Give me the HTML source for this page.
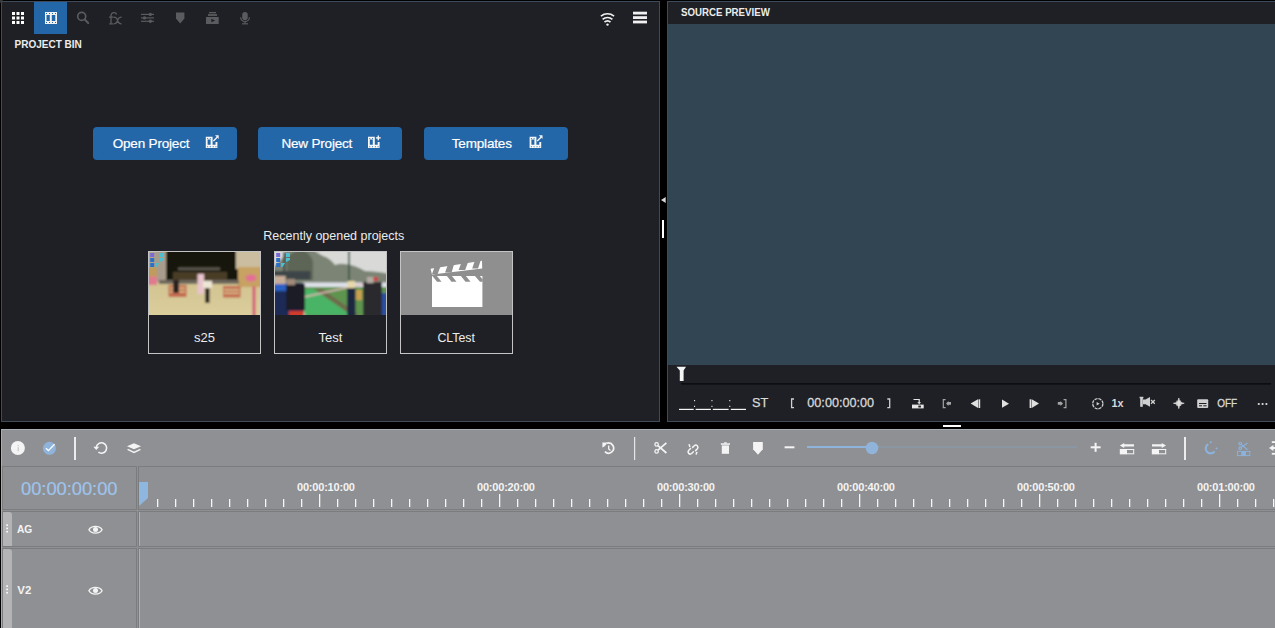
<!DOCTYPE html>
<html><head><meta charset="utf-8">
<style>
html,body{margin:0;padding:0;background:#000;width:1275px;height:628px;overflow:hidden}
*{box-sizing:border-box}
#root{position:relative;width:1275px;height:628px;overflow:hidden;background:#000;font-family:"Liberation Sans",sans-serif}
.abs{position:absolute}
#bin{left:1px;top:1px;width:659px;height:421px;background:#1e2025;border:1px solid #3e4b58}
#src{left:667px;top:1px;width:700px;height:421px;background:#1e2025;border:1px solid #3e4b58}
#prev{left:668px;top:24px;width:700px;height:341px;background:#324553}
#tl{left:1px;top:429px;width:1400px;height:300px;background:#8f9093;border:1px solid #a4acb4}
.cell{position:absolute;border:1px solid #7b7c7e}
.btn{position:absolute;top:127px;width:144px;height:33px;background:#2467a9;border-radius:4px}
.card{position:absolute;top:251px;width:113px;height:103px;border:1px solid #c4c4c4;background:#1e2025;overflow:hidden}
.thumb{position:absolute;left:0;top:0;width:111px;height:63px;overflow:hidden}
svg{position:absolute;left:0;top:0}
</style></head><body><div id="root">
<div id="bin" class="abs"></div>
<div id="src" class="abs"></div>
<div id="prev" class="abs"></div>
<div id="tl" class="abs"></div>
<!-- timeline cells -->
<div class="cell" style="left:2px;top:466px;width:135px;height:44px"></div>
<div class="cell" style="left:138px;top:466px;width:1200px;height:44px"></div>
<div class="cell" style="left:2px;top:511px;width:135px;height:36px"></div>
<div class="cell" style="left:138px;top:511px;width:1200px;height:36px"></div>
<div class="cell" style="left:2px;top:548px;width:135px;height:200px"></div>
<div class="cell" style="left:138px;top:548px;width:1200px;height:200px"></div>
<!-- buttons -->
<div class="btn" style="left:93px"></div>
<div class="btn" style="left:258px"></div>
<div class="btn" style="left:424px"></div>
<!-- cards -->
<div class="card" style="left:148px"><div class="thumb" id="t1"><svg width="111" height="63" viewBox="0 0 111 63" style="position:absolute;left:0;top:0"><defs><filter id="b1" x="-20%" y="-20%" width="140%" height="140%"><feGaussianBlur stdDeviation="0.8"/></filter>
<linearGradient id="fl" x1="0" y1="0" x2="0" y2="1"><stop offset="0" stop-color="#c9b985"/><stop offset="1" stop-color="#dccf9e"/></linearGradient></defs>
<g filter="url(#b1)">
<rect x="-4" y="-4" width="119" height="71" fill="url(#fl)"/>
<rect x="16" y="-4" width="73" height="34" fill="#17130e"/>
<rect x="-4" y="-4" width="21" height="34" fill="#b2a58f"/>
<rect x="5" y="-4" width="11" height="34" fill="#a89c8c"/>
<rect x="-4" y="15" width="12" height="17" fill="#c09c5c"/>
<rect x="87" y="-4" width="28" height="21" fill="#cbbd9f"/>
<rect x="89" y="15" width="26" height="20" fill="#c7a263"/>
<rect x="29" y="15.5" width="42" height="2.5" fill="#5e5a50"/>
<rect x="24" y="20" width="54" height="9" fill="#4a3d28"/>
<rect x="10" y="28" width="80" height="4" fill="#6d665c"/>
<rect x="19.5" y="33" width="18" height="12" fill="#c46a50"/>
<rect x="21" y="35.5" width="15" height="1.5" fill="#d9c590"/><rect x="21" y="39" width="15" height="1.5" fill="#d9c590"/>
<rect x="74" y="34" width="17.5" height="11.5" fill="#c46a50"/>
<rect x="75" y="37" width="15" height="1.5" fill="#d9c590"/><rect x="75" y="40.5" width="15" height="1.5" fill="#d9c590"/>
<rect x="24" y="28" width="6" height="13" fill="#2a2420"/>
<rect x="48.5" y="22" width="6.5" height="20" fill="#e8c4cc"/>
<rect x="54" y="29" width="9" height="7" fill="#eee6d4"/>
<rect x="56" y="36" width="4.5" height="15" fill="#262220"/>
<ellipse cx="102" cy="26" rx="5.5" ry="3.5" fill="#e46e94"/>
<rect x="103.5" y="34.5" width="3" height="32" fill="#d45c78"/>
<rect x="-4" y="24.5" width="12" height="8.5" fill="#e07a8e"/>
</g><g><rect x="1.2" y="1" width="4" height="4" fill="#7a6ad8"/><rect x="1.2" y="6" width="4" height="4" fill="#2a6fc8"/><rect x="1.2" y="11" width="4" height="4" fill="#2a6fc8"/><rect x="11" y="1" width="4" height="4" fill="#4cc0d0"/><path d="M11,6 H15 V8 L11,10 Z" fill="#4cc0d0"/><path d="M6.2,11 H10.2 L7.5,15 H6.2 Z" fill="#4cc0d0"/></g></svg></div></div>
<div class="card" style="left:274px"><div class="thumb" id="t2"><svg width="111" height="63" viewBox="0 0 111 63" style="position:absolute;left:0;top:0"><defs><filter id="b2" x="-20%" y="-20%" width="140%" height="140%"><feGaussianBlur stdDeviation="0.8"/></filter></defs>
<g filter="url(#b2)">
<rect x="-4" y="-4" width="119" height="71" fill="#d9dad8"/>
<path d="M-4,16 Q4,12 10,2 L12,-4 H36 Q44,2 48,4 Q55,6 60,13 Q64,11 70,12 Q80,13 90,19 Q100,19 115,22 V31 H-4 Z" fill="#7b8474"/>
<path d="M12,28 V6 Q18,-2 28,-2 Q36,2 38,10 V28 Z" fill="#5d6656"/><rect x="8" y="0" width="2.5" height="28" fill="#4a4c48"/><rect x="73" y="-4" width="2" height="42" fill="#3e5a48"/>
<rect x="-4" y="19" width="39.5" height="9" fill="#3e4448"/>
<rect x="26.7" y="30.5" width="88" height="6" fill="#dfe2ea"/>
<rect x="30" y="35" width="85" height="32" fill="#5f9450"/>
<path d="M40,37 L47,37 L84,63 L76,63 Z" fill="#6e6a4c"/>
<path d="M24.5,37.6 L38,37 L76,63 L30,63 Z" fill="#4ab466"/>
<path d="M29,45 L90.4,31.5" stroke="#e0b8b8" stroke-width="1.3"/>
<rect x="81" y="38" width="6" height="10" fill="#c8a050"/>
<rect x="-4" y="31" width="33" height="36" fill="#1f2c55"/>
<rect x="-4" y="31" width="19.7" height="8" fill="#2c5ec4"/>
<rect x="-4" y="24" width="14.7" height="8" fill="#c8ae98"/>
<rect x="11" y="32" width="19" height="26" fill="#1e1f26"/>
<rect x="12" y="27" width="8" height="6" fill="#a08a78"/>
<rect x="72" y="36" width="8.5" height="31" fill="#1c283f"/>
<rect x="72.5" y="29" width="7.5" height="7" fill="#e6d8a8"/>
<rect x="88" y="30" width="19" height="37" fill="#2c2c2e"/>
<rect x="92" y="25" width="6.6" height="6" fill="#b4aca4"/>
<rect x="98.6" y="25" width="4.4" height="4" fill="#cc4040"/>
<rect x="107" y="41" width="8" height="26" fill="#2a50a0"/>
<rect x="14" y="59" width="15" height="8" fill="#d03a2a"/>
</g><g><rect x="1.2" y="1" width="4" height="4" fill="#7a6ad8"/><rect x="1.2" y="6" width="4" height="4" fill="#2a6fc8"/><rect x="1.2" y="11" width="4" height="4" fill="#2a6fc8"/><rect x="11" y="1" width="4" height="4" fill="#4cc0d0"/><path d="M11,6 H15 V8 L11,10 Z" fill="#4cc0d0"/><path d="M6.2,11 H10.2 L7.5,15 H6.2 Z" fill="#4cc0d0"/></g></svg></div></div>
<div class="card" style="left:400px"><div class="thumb" id="t3" style="background:#8f8f8f"></div></div>
<svg width="1275" height="628" viewBox="0 0 1275 628" style="font-family:'Liberation Sans',sans-serif">
<!-- ===== PROJECT BIN TOOLBAR ===== -->
<path d="M0,0 H3.2 L0,3.2 Z" fill="#383838"/><rect x="1" y="1" width="1" height="1" fill="#3a3d40"/>
<rect x="34" y="2" width="33" height="32" fill="#2467a9"/>
<g fill="#ffffff">
<rect x="12" y="12" width="3" height="3"/><rect x="16.5" y="12" width="3" height="3"/><rect x="21" y="12" width="3" height="3"/>
<rect x="12" y="16.5" width="3" height="3"/><rect x="16.5" y="16.5" width="3" height="3"/><rect x="21" y="16.5" width="3" height="3"/>
<rect x="12" y="21" width="3" height="3"/><rect x="16.5" y="21" width="3" height="3"/><rect x="21" y="21" width="3" height="3"/>
</g>
<rect x="45" y="12" width="12" height="12" fill="#f2f2f2"/>
<g fill="#2467a9">
<rect x="46.5" y="15" width="3.3" height="6"/><rect x="51.8" y="15" width="3.5" height="6"/>
<rect x="46" y="13" width="1" height="1"/><rect x="49" y="13" width="1" height="1"/><rect x="52" y="13" width="1" height="1"/><rect x="55" y="13" width="1" height="1"/>
<rect x="46" y="22" width="1" height="1"/><rect x="49" y="22" width="1" height="1"/><rect x="52" y="22" width="1" height="1"/><rect x="55" y="22" width="1" height="1"/>
</g>
<g stroke="#595b5e" fill="none">
<circle cx="81.7" cy="16.4" r="4" stroke-width="1.7"/>
<line x1="84.6" y1="19.4" x2="88.2" y2="23" stroke-width="2" stroke-linecap="round"/>
<line x1="141" y1="14.4" x2="154" y2="14.4" stroke-width="1.2"/>
<line x1="141" y1="17.9" x2="154" y2="17.9" stroke-width="1.2"/>
<line x1="141" y1="21.3" x2="154" y2="21.3" stroke-width="1.2"/>
<line x1="242" y1="23.8" x2="248" y2="23.8" stroke-width="1.2"/>
<line x1="245" y1="21.5" x2="245" y2="23.8" stroke-width="1.2"/>
<path d="M240.6,17.2 A4.4,4.4 0 0 0 249.4,17.2" stroke-width="1.2"/>
</g>
<g fill="none" stroke="#595b5e" stroke-width="1.3"><path d="M111,23.8 V16 Q111,12.6 114.2,12.6 Q116.4,12.6 116.4,14.6"/><path d="M109,17.2 H113.5 M109.2,23.8 H113"/><path d="M113.6,17.2 Q116.8,17.2 117.6,20.5 Q118.4,23.8 121.6,23.8 M121.6,17.2 Q118.4,17.2 117.6,20.5 Q116.8,23.8 113.6,23.8"/></g>
<g fill="#595b5e">
<circle cx="150.3" cy="14.4" r="1.7"/><circle cx="144.5" cy="17.9" r="1.7"/><circle cx="150.3" cy="21.3" r="1.7"/>
<path d="M176,12.6 H184.4 V18.4 L180.2,23.6 L176,18.4 Z"/>
<rect x="209" y="12" width="7" height="1.3"/><rect x="208" y="14.1" width="9" height="1.8"/><rect x="206" y="17" width="12.7" height="7"/>
<rect x="242.2" y="11.9" width="5.5" height="8.4" rx="2.75"/>
</g>
<path d="M211.3,18.8 L215.2,20.5 L211.3,22.2 Z" fill="#1e2025"/>
<!-- wifi -->
<g stroke="#f0f0f0" fill="none" stroke-width="1.6">
<path d="M600.9,16.1 A11.1,11.1 0 0 1 614.1,16.1"/>
<path d="M602.6,19.3 A7.5,7.5 0 0 1 612.4,19.3"/>
<path d="M604.5,22.1 A4.2,4.2 0 0 1 610.5,22.1"/>
</g>
<circle cx="607.5" cy="24.6" r="1.2" fill="#f0f0f0"/>
<g fill="#f0f0f0">
<rect x="633" y="11.7" width="14" height="2.8"/><rect x="633" y="16.2" width="14" height="2.8"/><rect x="633" y="20.6" width="14" height="2.8"/>
</g>
<text x="14.5" y="48" font-size="11" font-weight="bold" fill="#ececec" textLength="67.3" lengthAdjust="spacingAndGlyphs">PROJECT BIN</text>
<!-- buttons text -->
<g font-size="13.5" fill="#ffffff" letter-spacing="-0.18" stroke="#ffffff" stroke-width="0.2">
<text x="112.7" y="147.6">Open Project</text>
<text x="281.4" y="147.6">New Project</text>
<text x="451.8" y="147.6">Templates</text>
</g>
<text x="263.3" y="240" font-size="12.8" fill="#ececec" textLength="141" lengthAdjust="spacingAndGlyphs">Recently opened projects</text>
<g font-size="13" fill="#ececec" text-anchor="middle">
<text x="204.5" y="342">s25</text>
<text x="330.5" y="342">Test</text>
<text x="437.4" y="342" text-anchor="start" textLength="37.6" lengthAdjust="spacingAndGlyphs">CLTest</text>
</g>
</svg>

<svg width="1275" height="628" viewBox="0 0 1275 628" style="font-family:'Liberation Sans',sans-serif">
<!-- ===== SPLITTERS ===== -->
<path d="M661,200 L665.7,197 L665.7,203 Z" fill="#d8d8d8"/>
<rect x="662" y="220" width="2" height="18" fill="#ffffff"/>
<rect x="943" y="425" width="18" height="2" fill="#ffffff"/>
<!-- ===== SOURCE PREVIEW ===== -->
<text x="681" y="15.8" font-size="11" font-weight="bold" fill="#ececec" textLength="88.8" lengthAdjust="spacingAndGlyphs">SOURCE PREVIEW</text>
<rect x="681" y="383" width="590" height="1.6" fill="#0c0d10"/>
<path d="M676.5,366.8 H686 L683.6,370.5 V381 H679.8 V370.5 Z" fill="#f4f4f4"/>
<g fill="#f6f6f6">
<rect x="679" y="408.8" width="14.7" height="1.2"/><rect x="695.6" y="408.8" width="15.3" height="1.2"/><rect x="712.8" y="408.8" width="15.8" height="1.2"/><rect x="730.8" y="408.8" width="15.2" height="1.2"/>
<rect x="694" y="400.1" width="1.1" height="1.1"/><rect x="694" y="405.8" width="1.1" height="1.1"/>
<rect x="711.4" y="400.1" width="1.1" height="1.1"/><rect x="711.4" y="405.8" width="1.1" height="1.1"/>
<rect x="729.2" y="400.1" width="1.1" height="1.1"/><rect x="729.2" y="405.8" width="1.1" height="1.1"/>
</g>
<g fill="#d9d9d9" font-size="13">
<text x="752" y="407" textLength="16.3" lengthAdjust="spacingAndGlyphs" stroke="#d9d9d9" stroke-width="0.25">ST</text>
<text x="807.3" y="407" font-size="13.6" textLength="66.8" lengthAdjust="spacingAndGlyphs" stroke="#d9d9d9" stroke-width="0.3">00:00:00:00</text>
<text x="1111.6" y="407" font-size="11.5" font-weight="bold" textLength="12" lengthAdjust="spacingAndGlyphs">1x</text>
<text x="1217.2" y="407" font-size="11" textLength="20" lengthAdjust="spacingAndGlyphs" stroke="#d9d9d9" stroke-width="0.3">OFF</text>
</g>
<g fill="none" stroke="#cfcfcf" stroke-width="1.3">
<path d="M794,399 H791.6 V407.6 H794"/>
<path d="M887.3,399 H889.7 V407.6 H887.3"/>
</g>
<!-- insert icon -->
<g fill="#e6e6e6">
<rect x="912" y="404.6" width="11.7" height="3.8"/>
</g>
<rect x="918.3" y="405.6" width="2.6" height="1.9" fill="#1e2025"/>
<path d="M913.5,399.5 H919.2 V403" fill="none" stroke="#e6e6e6" stroke-width="1.2"/>
<path d="M917.3,402.3 L921.1,402.3 L919.2,404.2 Z" fill="#e6e6e6"/>
<!-- mark in -->
<g fill="none" stroke="#a4a4a4" stroke-width="1.2"><path d="M945.6,399.6 H943.3 V407.6 H945.6"/></g>
<path d="M946,403.4 L948.5,400.9 V402 H951 V404.8 H948.5 V405.9 Z" fill="#a4a4a4"/>
<!-- step back -->
<path d="M978,399.3 V408 L970.6,403.6 Z" fill="#e0e0e0"/><rect x="978.5" y="399.3" width="1.7" height="8.7" fill="#e0e0e0"/>
<path d="M1002,399.6 V407.8 L1009,403.7 Z" fill="#e0e0e0"/>
<rect x="1029.6" y="399.3" width="1.7" height="8.7" fill="#e0e0e0"/><path d="M1031.7,399.3 V408 L1039,403.6 Z" fill="#e0e0e0"/>
<!-- mark out -->
<g fill="none" stroke="#a4a4a4" stroke-width="1.2"><path d="M1063.6,399.6 H1065.9 V407.6 H1063.6"/></g>
<path d="M1063,403.4 L1060.5,400.9 V402 H1057.8 V404.8 H1060.5 V405.9 Z" fill="#a4a4a4"/>
<!-- speed circle -->
<circle cx="1097.8" cy="403.7" r="5.1" fill="none" stroke="#cfcfcf" stroke-width="1.3" stroke-dasharray="3.1 0.9"/>
<path d="M1096.6,401.9 V405.5 L1099.7,403.7 Z" fill="#cfcfcf"/>
<!-- mute -->
<g fill="#d0d0d0">
<rect x="1140.2" y="397" width="2.6" height="9.8"/>
<rect x="1139.6" y="396.8" width="3.8" height="1.5"/>
<path d="M1143,399.5 H1145.5 L1150,396.9 V406.8 L1145.5,404.2 H1143 Z"/>
</g>
<g stroke="#d0d0d0" stroke-width="1.3"><line x1="1151" y1="400" x2="1154.8" y2="403.8"/><line x1="1154.8" y1="400" x2="1151" y2="403.8"/></g>
<!-- waveform -->
<path d="M1173.5,403.3 Q1178.3,402.9 1178.8,398 Q1179.3,402.9 1184.2,403.3 Q1179.3,403.7 1178.8,408.6 Q1178.3,403.7 1173.5,403.3 Z" fill="#e0e0e0" stroke="#d8d8d8" stroke-width="0.7"/><path d="M1177,400.5 V406 M1180.6,400.5 V406" stroke="#c8c8c8" stroke-width="0.9"/>
<!-- subtitles -->
<rect x="1197.2" y="399.3" width="11" height="8.6" rx="1" fill="#d0d0d0"/>
<g fill="#1e2025"><rect x="1199" y="403" width="7.5" height="1"/><rect x="1199" y="405.3" width="3" height="1"/><rect x="1203.3" y="405.3" width="3.3" height="1"/></g>
<!-- more -->
<g fill="#e0e0e0"><circle cx="1258.8" cy="404" r="1.1"/><circle cx="1262.6" cy="404" r="1.1"/><circle cx="1266.4" cy="404" r="1.1"/></g>
</svg>

<svg width="1275" height="628" viewBox="0 0 1275 628" style="font-family:'Liberation Sans',sans-serif">
<!-- ===== TIMELINE TOOLBAR ===== -->
<circle cx="17.9" cy="448" r="7" fill="#f4f4f4"/>
<rect x="17.6" y="444.9" width="1.3" height="1.3" fill="#c9cacc"/><rect x="17.6" y="447.2" width="1.3" height="4" fill="#c9cacc"/>
<circle cx="49.45" cy="448.3" r="6.5" fill="#8fb3d9"/>
<path d="M45.9,448.3 L48.4,450.6 L54.6,444.3" fill="none" stroke="#ffffff" stroke-width="1.3"/>
<rect x="74" y="437" width="2" height="23" fill="#ececec"/>
<path d="M96.3,447.2 A5.2,5.2 0 1 1 98.4,452.2" fill="none" stroke="#f4f4f4" stroke-width="1.6"/>
<path d="M93.4,446.7 L99.2,446.7 L96.3,450.1 Z" fill="#f4f4f4"/>
<path d="M127,446.2 L134,443.2 L141,446.2 L134,449.3 Z" fill="#f4f4f4"/>
<path d="M127.6,449.4 L134,452.4 L140.4,449.4" fill="none" stroke="#f4f4f4" stroke-width="1.4"/>
<!-- history -->
<path d="M606.6,443.3 A5.1,5.1 0 1 1 604.9,451.7" fill="none" stroke="#f4f4f4" stroke-width="1.7"/>
<path d="M602.4,442.6 H607.2 L606.2,444.6 L604.4,446.5 L602.4,447.4 Z" fill="#f4f4f4"/>
<path d="M608.7,445.6 V448.9 L610.5,450.4" fill="none" stroke="#f4f4f4" stroke-width="1.3"/>
<rect x="634" y="437" width="1.2" height="23" fill="#e6e6e6"/>
<!-- scissors -->
<g fill="none" stroke="#f4f4f4">
<circle cx="656.6" cy="444.4" r="1.7" stroke-width="1.3"/><circle cx="656.6" cy="451.4" r="1.7" stroke-width="1.3"/>
<line x1="658" y1="445.6" x2="666.4" y2="453" stroke-width="1.7"/><line x1="658" y1="450.2" x2="666.4" y2="442.8" stroke-width="1.7"/>
</g>
<!-- unlink -->
<g fill="none" stroke="#f4f4f4" stroke-width="1.5" stroke-linecap="round">
<path d="M690.5,448.5 L688.6,450.4 A2.2,2.2 0 0 0 691.7,453.5 L693.4,451.8"/>
<path d="M695.6,450.6 L697.4,448.8 A2.2,2.2 0 0 0 694.3,445.7 L692.6,447.4"/>
<line x1="689.2" y1="444.8" x2="689.8" y2="446.6"/><line x1="696.8" y1="452.4" x2="696.2" y2="454"/>
</g>
<!-- trash -->
<g fill="#f4f4f4"><rect x="720.8" y="443.3" width="9.2" height="1.5"/><rect x="724" y="442.3" width="2.8" height="1.2"/><rect x="721.8" y="445.4" width="7.2" height="8.4"/></g>
<path d="M753.1,441.9 H762.8 V449.2 L758,454.7 L753.1,449.2 Z" fill="#f4f4f4"/>
<rect x="784.6" y="446.3" width="9.8" height="2" fill="#f4f4f4"/>
<!-- slider -->
<rect x="807" y="446" width="65" height="2" fill="#8fb4dc"/>
<rect x="872" y="446" width="205" height="2" fill="#8a97a3"/>
<circle cx="872" cy="448" r="6.3" fill="#8fb3d9"/>
<g fill="#f4f4f4"><rect x="1090.7" y="446.3" width="9.9" height="2"/><rect x="1094.6" y="442.8" width="2" height="9"/></g>
<!-- arrow clip left -->
<path d="M1119.9,445.4 L1124.2,442.9 V444.3 H1134 V446.5 H1124.2 V447.9 Z" fill="#f4f4f4"/>
<rect x="1120.3" y="449.5" width="13.4" height="4.3" fill="none" stroke="#f4f4f4" stroke-width="1"/>
<rect x="1120" y="449.2" width="7" height="4.9" fill="#f4f4f4"/>
<!-- arrow clip right -->
<path d="M1166,445.4 L1161.7,442.9 V444.3 H1152 V446.5 H1161.7 V447.9 Z" fill="#f4f4f4"/>
<rect x="1152.3" y="449.5" width="13.4" height="4.3" fill="none" stroke="#f4f4f4" stroke-width="1"/>
<rect x="1152" y="449.2" width="7" height="4.9" fill="#f4f4f4"/>
<rect x="1184" y="437" width="2" height="23" fill="#ececec"/>
<!-- magnet -->
<path d="M1208.3,444.2 A4.9,4.9 0 1 0 1214.6,451.4" fill="none" stroke="#8cb3de" stroke-width="2.1"/>
<path d="M1210.8,441.1 L1212,442.3 L1210.8,443.5 L1209.6,442.3 Z M1216.6,447.2 L1217.8,448.4 L1216.6,449.6 L1215.4,448.4 Z" fill="#8cb3de"/>
<!-- scissors clip -->
<g fill="none" stroke="#8cb3de" stroke-width="1.1">
<circle cx="1240.2" cy="443.6" r="1.3"/><circle cx="1240.2" cy="448.2" r="1.3"/>
<line x1="1241.3" y1="444.4" x2="1247.5" y2="449.8"/><line x1="1241.3" y1="447.4" x2="1247.5" y2="443"/>
<rect x="1237.4" y="451.4" width="12.5" height="4.2" stroke-width="0.9"/>
</g>
<rect x="1241.3" y="451.4" width="4.6" height="4.2" fill="#8cb3de"/>
<!-- partial -->
<path d="M1269,448 L1273.5,445 V451 Z" fill="#f4f4f4"/><rect x="1272" y="447" width="4" height="2" fill="#f4f4f4"/>
<rect x="1271.8" y="441.2" width="4" height="1.8" fill="#f4f4f4"/><rect x="1271.8" y="452.9" width="4" height="1.8" fill="#f4f4f4"/>
<!-- ===== HEADER / RULER ===== -->
<text x="21" y="495" font-size="18" fill="#9ec4ed" stroke="#9ec4ed" stroke-width="0.2" textLength="96.5" lengthAdjust="spacingAndGlyphs">00:00:00:00</text>
<path d="M139,482 H148 V498 L139,506 Z" fill="#8fb6df"/>
<rect x="139" y="512" width="1" height="34" fill="#8fb6df"/><rect x="139" y="549" width="1" height="80" fill="#8fb6df"/>
<g fill="#f6f6f6"><rect x="157" y="499" width="1.3" height="8"/><rect x="175" y="499" width="1.3" height="8"/><rect x="193" y="499" width="1.3" height="8"/><rect x="211" y="499" width="1.3" height="8"/><rect x="229" y="499" width="1.3" height="8"/><rect x="247" y="499" width="1.3" height="8"/><rect x="265" y="499" width="1.3" height="8"/><rect x="283" y="499" width="1.3" height="8"/><rect x="301" y="499" width="1.3" height="8"/><rect x="319" y="494" width="1.3" height="13"/><rect x="337" y="499" width="1.3" height="8"/><rect x="355" y="499" width="1.3" height="8"/><rect x="373" y="499" width="1.3" height="8"/><rect x="391" y="499" width="1.3" height="8"/><rect x="409" y="499" width="1.3" height="8"/><rect x="427" y="499" width="1.3" height="8"/><rect x="445" y="499" width="1.3" height="8"/><rect x="463" y="499" width="1.3" height="8"/><rect x="481" y="499" width="1.3" height="8"/><rect x="499" y="494" width="1.3" height="13"/><rect x="517" y="499" width="1.3" height="8"/><rect x="535" y="499" width="1.3" height="8"/><rect x="553" y="499" width="1.3" height="8"/><rect x="571" y="499" width="1.3" height="8"/><rect x="589" y="499" width="1.3" height="8"/><rect x="607" y="499" width="1.3" height="8"/><rect x="625" y="499" width="1.3" height="8"/><rect x="643" y="499" width="1.3" height="8"/><rect x="661" y="499" width="1.3" height="8"/><rect x="679" y="494" width="1.3" height="13"/><rect x="697" y="499" width="1.3" height="8"/><rect x="715" y="499" width="1.3" height="8"/><rect x="733" y="499" width="1.3" height="8"/><rect x="751" y="499" width="1.3" height="8"/><rect x="769" y="499" width="1.3" height="8"/><rect x="787" y="499" width="1.3" height="8"/><rect x="805" y="499" width="1.3" height="8"/><rect x="823" y="499" width="1.3" height="8"/><rect x="841" y="499" width="1.3" height="8"/><rect x="859" y="494" width="1.3" height="13"/><rect x="877" y="499" width="1.3" height="8"/><rect x="895" y="499" width="1.3" height="8"/><rect x="913" y="499" width="1.3" height="8"/><rect x="931" y="499" width="1.3" height="8"/><rect x="949" y="499" width="1.3" height="8"/><rect x="967" y="499" width="1.3" height="8"/><rect x="985" y="499" width="1.3" height="8"/><rect x="1003" y="499" width="1.3" height="8"/><rect x="1021" y="499" width="1.3" height="8"/><rect x="1039" y="494" width="1.3" height="13"/><rect x="1057" y="499" width="1.3" height="8"/><rect x="1075" y="499" width="1.3" height="8"/><rect x="1093" y="499" width="1.3" height="8"/><rect x="1111" y="499" width="1.3" height="8"/><rect x="1129" y="499" width="1.3" height="8"/><rect x="1147" y="499" width="1.3" height="8"/><rect x="1165" y="499" width="1.3" height="8"/><rect x="1183" y="499" width="1.3" height="8"/><rect x="1201" y="499" width="1.3" height="8"/><rect x="1219" y="494" width="1.3" height="13"/><rect x="1237" y="499" width="1.3" height="8"/><rect x="1255" y="499" width="1.3" height="8"/><rect x="1273" y="499" width="1.3" height="8"/></g>
<g font-size="11" font-weight="bold" fill="#f4f4f4" letter-spacing="-0.2">
<text x="297" y="491">00:00:10:00</text>
<text x="477" y="491">00:00:20:00</text>
<text x="657" y="491">00:00:30:00</text>
<text x="837" y="491">00:00:40:00</text>
<text x="1017" y="491">00:00:50:00</text>
<text x="1197" y="491">00:01:00:00</text>
</g>
<!-- ===== TRACK HEADERS ===== -->
<path d="M3,546 V513 Q3,512 4,512 H9 Q12,512 12,515 V546 Z" fill="#b4b4b6"/>
<path d="M3,640 V550 Q3,549 4,549 H9 Q12,549 12,552 V640 Z" fill="#b4b4b6"/>
<g fill="#ffffff">
<rect x="6.3" y="524.3" width="1.6" height="1.6"/><rect x="6.3" y="527.6" width="1.6" height="1.6"/><rect x="6.3" y="530.9" width="1.6" height="1.6"/>
<rect x="6.3" y="585.3" width="1.6" height="1.6"/><rect x="6.3" y="588.6" width="1.6" height="1.6"/><rect x="6.3" y="591.9" width="1.6" height="1.6"/>
</g>
<g font-size="11" font-weight="bold" fill="#f4f4f4">
<text x="17" y="533" textLength="15.3" lengthAdjust="spacingAndGlyphs">AG</text>
<text x="17.3" y="594" textLength="14" lengthAdjust="spacingAndGlyphs">V2</text>
</g>
<g id="eyes" fill="none" stroke="#f4f4f4" stroke-width="1.35">
<path d="M88.9,529.75 C91.2,525.3 99.8,525.3 102.1,529.75 C99.8,534.2 91.2,534.2 88.9,529.75 Z"/>
<circle cx="95.5" cy="529.6" r="2.5" fill="#f4f4f4" stroke="none"/>
<path d="M88.9,590.75 C91.2,586.3 99.8,586.3 102.1,590.75 C99.8,595.2 91.2,595.2 88.9,590.75 Z"/>
<circle cx="95.5" cy="590.6" r="2.5" fill="#f4f4f4" stroke="none"/>
</g>
</svg>

<svg width="1275" height="628" viewBox="0 0 1275 628">
<!-- button icons -->
<path fill-rule="evenodd" fill="#f6f6f6" d="M205.8,136.8 H212.6 V142.1 H217.4 V147.9 H205.8 Z M207.6,139.6 V144.7 H210.6 V139.6 Z M212.6,142.1 V144.7 H215.5 V142.1 Z"/><g fill="#2467a9"><rect x="207.1" y="138.2" width="1" height="0.9"/><rect x="209.8" y="138.2" width="1" height="0.9"/><rect x="207.1" y="146.3" width="1" height="0.9"/><rect x="209.8" y="146.3" width="1" height="0.9"/><rect x="212.7" y="146.3" width="1" height="0.9"/><rect x="215.4" y="146.3" width="1" height="0.9"/></g><line x1="213.4" y1="141" x2="217.2" y2="137.2" stroke="#f6f6f6" stroke-width="1.3"/><path d="M215.0,135.3 H218.7 V139 Z" fill="#f6f6f6"/>
<path fill-rule="evenodd" fill="#f6f6f6" d="M529.6,136.8 H536.4 V142.1 H541.2 V147.9 H529.6 Z M531.4,139.6 V144.7 H534.4 V139.6 Z M536.4,142.1 V144.7 H539.3 V142.1 Z"/><g fill="#2467a9"><rect x="530.9" y="138.2" width="1" height="0.9"/><rect x="533.6" y="138.2" width="1" height="0.9"/><rect x="530.9" y="146.3" width="1" height="0.9"/><rect x="533.6" y="146.3" width="1" height="0.9"/><rect x="536.5" y="146.3" width="1" height="0.9"/><rect x="539.2" y="146.3" width="1" height="0.9"/></g><line x1="537.2" y1="141" x2="541.0" y2="137.2" stroke="#f6f6f6" stroke-width="1.3"/><path d="M538.8,135.3 H542.5 V139 Z" fill="#f6f6f6"/>
<path fill-rule="evenodd" fill="#f6f6f6" d="M368,136.8 H374.8 V142.1 H379.6 V147.9 H368 Z M369.8,139.6 V144.7 H372.8 V139.6 Z M374.8,142.1 V144.7 H377.7 V142.1 Z"/><g fill="#2467a9"><rect x="369.3" y="138.2" width="1" height="0.9"/><rect x="372.0" y="138.2" width="1" height="0.9"/><rect x="369.3" y="146.3" width="1" height="0.9"/><rect x="372.0" y="146.3" width="1" height="0.9"/><rect x="374.9" y="146.3" width="1" height="0.9"/><rect x="377.6" y="146.3" width="1" height="0.9"/></g><rect x="375.9" y="137.2" width="4.8" height="1.4" fill="#f6f6f6"/><rect x="377.6" y="135.5" width="1.4" height="4.8" fill="#f6f6f6"/>
<!-- clapperboard -->
<g fill="#ffffff">
<rect x="432" y="276" width="50.4" height="31"/>
<path d="M430.6,268.8 L482,260.8 L482.2,268.4 L432,274.6 Z"/>
</g>
<g fill="#8f8f8f">
<path d="M432,275.6 H436.5 L441.5,281.8 H437 Z"/>
<path d="M446.5,275.6 H451.5 L456.5,281.8 H451.5 Z"/>
<path d="M460.5,275.6 H465.5 L470.5,281.8 H465.5 Z"/>
<path d="M474.5,275.6 H479.5 L482.6,279.5 V281.8 H480 Z"/>
<path d="M435,266 L440.6,266 L437.6,274 L432,274 Z"/>
<path d="M448.1,264 L454.1,264 L451.6,272.5 L445.1,272.5 Z"/>
<path d="M461.6,262 L468.1,262 L465.1,270 L458.6,270 Z"/>
<path d="M475.2,259.5 L481,259.5 L478,268.5 L472.2,268.5 Z"/>
</g>
</svg>

</div></body></html>
